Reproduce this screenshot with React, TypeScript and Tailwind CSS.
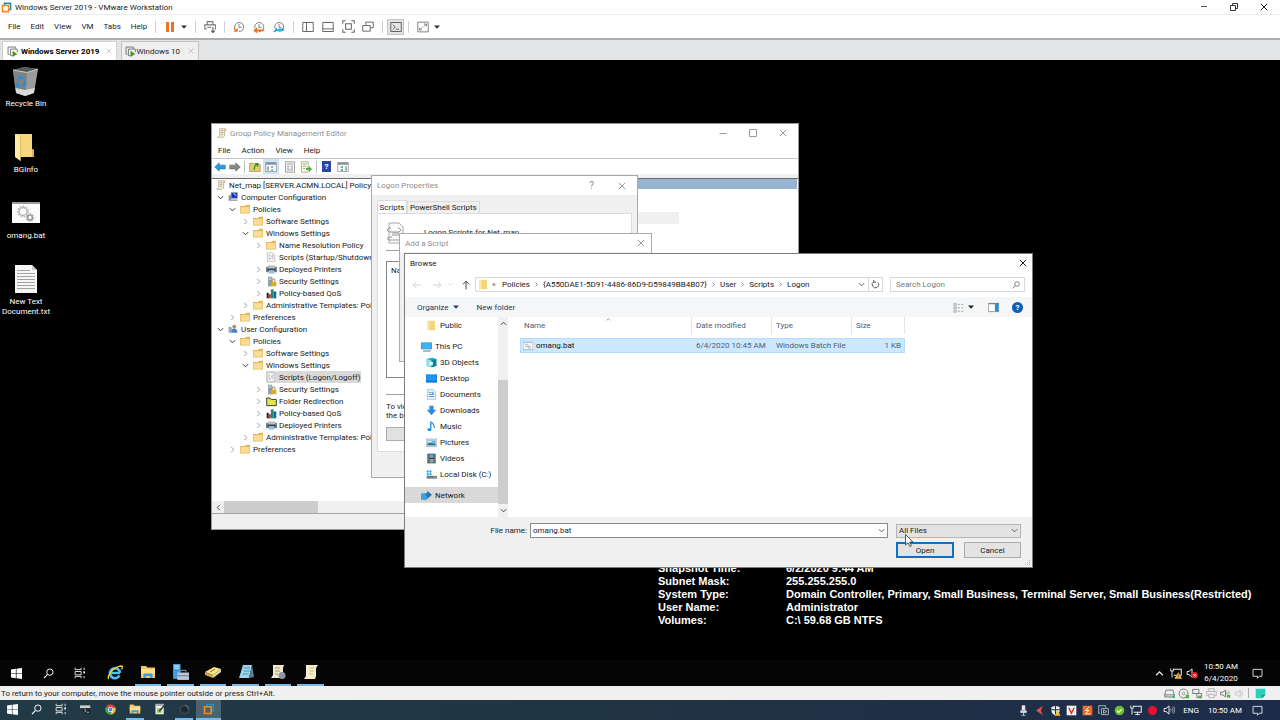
import { useState } from "react";
import type { ReactNode } from "react";
import clsx from "clsx";

type SvgProps = { size?: string; box?: string; children: ReactNode };

function Svg({ size = "size-3", box = "0 0 16 16", children }: SvgProps) {
  return (
    <svg className={clsx("shrink-0", size)} viewBox={box} fill="none" aria-hidden="true">
      {children}
    </svg>
  );
}

/* ---------- small shared glyphs ---------- */

function Chevron({ dir, size = "size-2", color = "#444" }: { dir: "down" | "right" | "up" | "left"; size?: string; color?: string }) {
  const paths = {
    down: "M2 5l6 6 6-6",
    right: "M5 2l6 6-6 6",
    up: "M2 11l6-6 6 6",
    left: "M11 2L5 8l6 6",
  };
  return (
    <Svg size={size}>
      <path d={paths[dir]} stroke={color} strokeWidth="2.2" />
    </Svg>
  );
}

function Triangle({ color = "#333" }: { color?: string }) {
  return (
    <Svg size="size-[6px]" box="0 0 6 6">
      <path d="M0 1.5h6L3 4.8z" fill={color} />
    </Svg>
  );
}

function CloseGlyph({ color = "#222", size = "size-[8px]" }: { color?: string; size?: string }) {
  return (
    <Svg size={size} box="0 0 8 8">
      <path d="M.8.8l6.4 6.4M7.2.8L.8 7.2" stroke={color} strokeWidth="1" />
    </Svg>
  );
}

function WindowsLogo({ size = "size-[11px]" }: { size?: string }) {
  return (
    <Svg size={size} box="0 0 12 12">
      <path d="M0 1.7l5.3-.8v4.8H0zM6 .8l6-.8v5.7H6zM0 6.3h5.3v4.8L0 10.3zM6 6.3h6V12l-6-.8z" fill="#fff" />
    </Svg>
  );
}

function SearchGlyph({ color = "#fff", size = "size-3" }: { color?: string; size?: string }) {
  return (
    <Svg size={size}>
      <circle cx="10" cy="6" r="4.6" stroke={color} strokeWidth="1.4" />
      <path d="M6.6 9.4L1.5 14.8" stroke={color} strokeWidth="1.6" />
    </Svg>
  );
}

function TaskView() {
  return (
    <Svg size="size-3">
      <path d="M1.5 1v2.5h8V1M1.5 15v-2.5h8V15M1.5 6h8v4.5h-8zM13.5 1v3M13.5 12v3" stroke="#ddd" strokeWidth="1.3" />
      <path d="M12.5 5.5h2v3h-2z" fill="#fff" />
    </Svg>
  );
}

function ExplorerIcon({ size = "size-4" }: { size?: string }) {
  return (
    <Svg size={size}>
      <path d="M1 2h5l1.5 1.5H15V14H1z" fill="#f2c75c" />
      <path d="M1 5h14v5H1z" fill="#ffe08a" />
      <path d="M3.5 14V9.5h9V14h-2.2v-2H5.7v2z" fill="#3f9ce0" />
    </Svg>
  );
}

function ActionCenter({ size = "size-3" }: { size?: string }) {
  return (
    <Svg size={size}>
      <path d="M1.5 2h13v10h-4L8 14.8V12H1.5z" stroke="#e8e8e8" strokeWidth="1.3" />
    </Svg>
  );
}

function VmwareLogo({ size = "size-[11px]" }: { size?: string }) {
  return (
    <Svg size={size}>
      <path d="M5 5V2h9v9h-3" stroke="#1b8fc6" strokeWidth="2.2" />
      <path d="M2 5h9v9H2z" stroke="#f38b1f" strokeWidth="2.2" />
    </Svg>
  );
}

function VmTabIcon({ color = "#777" }: { color?: string }) {
  return (
    <Svg size="size-[11px]">
      <path d="M3.5 12h-2V1.5h11V4M8 14H5V4.5h10V9" stroke={color} strokeWidth="1.4" />
      <path d="M8 7l7 4.5L8 16z" fill="#3f9c1d" />
    </Svg>
  );
}

function NetworkTray({ alert }: { alert?: boolean }) {
  return (
    <Svg size="size-3">
      <path d="M5 3h10v8H5M7 14h6M10 11v3" stroke="#eee" strokeWidth="1.4" />
      <path d="M1 2v3.5h3.5V2M2.7 5.5V14" stroke="#eee" strokeWidth="1.3" />
      {alert && <path d="M11 7l5 8.5H6z" fill="#fbc02d" />}
      {alert && <path d="M11 10v3M11 13.7v1" stroke="#222" strokeWidth="1" />}
    </Svg>
  );
}

function Speaker({ muted, color = "#eee" }: { muted?: boolean; color?: string }) {
  return (
    <Svg size="size-3">
      <path d="M1.5 6H4l4-3.5v11L4 10H1.5z" stroke={color} strokeWidth="1.3" />
      {muted ? (
        <>
          <circle cx="11.5" cy="11" r="4.3" fill="#e0232e" />
          <path d="M10 9.5l3 3M13 9.5l-3 3" stroke="#fff" strokeWidth="1.1" />
        </>
      ) : (
        <path d="M10 6c1 1.2 1 2.8 0 4M12 4.5c1.8 2 1.8 5 0 7M14 3c2 3 2 7 0 10" stroke={color} opacity=".7" />
      )}
    </Svg>
  );
}

/* ---------- VMware chrome ---------- */

function Divider() {
  return <span className="h-3 w-px bg-[#cfcfcf]" />;
}

function ToolButton({ label, active, children }: { label: string; active?: boolean; children: ReactNode }) {
  return (
    <button
      type="button"
      aria-label={label}
      className={clsx("flex h-4 items-center justify-center", active ? "w-[17px] border border-[#c4c4c4] bg-[#e4e4e4]" : "w-5")}
    >
      {children}
    </button>
  );
}

function Clock({ accent, kind }: { accent: string; kind: "take" | "revert" | "manage" }) {
  return (
    <Svg size="size-3">
      <path d="M2.5 9.5A6 6 0 1 1 8 14" stroke="#7a7a7a" strokeWidth="1.3" />
      <path d="M8 4v4.5h3.5" stroke="#7a7a7a" strokeWidth="1.2" />
      {kind === "take" && <path d="M1 9.5L5.5 14M1.5 13.5h4v-4" stroke={accent} strokeWidth="1.6" />}
      {kind === "revert" && <path d="M15 12.5H2M5.5 9.5L2 12.5l3.5 3" stroke={accent} strokeWidth="2.2" />}
      {kind === "manage" && <path d="M1 14.5l4.500-3M4.500 9.500a2 2 0 0 0 3.500 2h5M13 9.800v3.500" stroke={accent} strokeWidth="2.2" />}
    </Svg>
  );
}

const VM_MENU = ["File", "Edit", "View", "VM", "Tabs", "Help"];

function VmHeader() {
  return (
    <header className="bg-white text-[#222]">
      <div className="flex h-[15px] items-center border-b border-[#ececec]">
        <div className="flex items-center gap-[3px] pl-px">
          <VmwareLogo />
          <h1>Windows Server 2019 - VMware Workstation</h1>
        </div>
        <div className="ml-auto flex items-center gap-[22px] pr-3">
          <button type="button" aria-label="Minimize">
            <Svg size="size-[8px]" box="0 0 8 8"><path d="M1 3.5h6" stroke="#555" /></Svg>
          </button>
          <button type="button" aria-label="Restore">
            <Svg size="size-[8px]" box="0 0 8 8"><path d="M.5 2.5h5v5h-5zM2.5 2.5v-2h5v5h-2" stroke="#333" /></Svg>
          </button>
          <button type="button" aria-label="Close"><CloseGlyph /></button>
        </div>
      </div>

      <div className="flex h-[23px] items-center">
        <nav className="flex items-center gap-[10px] pr-2 pl-2" aria-label="Main menu">
          {VM_MENU.map((item) => (
            <button key={item} type="button">{item}</button>
          ))}
        </nav>
        <Divider />
        <div className="flex items-center gap-px pl-1">
          <ToolButton label="Suspend">
            <Svg size="size-[10px]" box="0 0 10 10"><path d="M1 0h3v10H1zM6 0h3v10H6z" fill="#f37021" /></Svg>
          </ToolButton>
          <button type="button" aria-label="Power options"><Triangle /></button>
        </div>
        <span className="ml-2 flex items-center gap-1">
          <Divider />
          <ToolButton label="Send Ctrl+Alt+Del">
            <Svg size="size-[13px]">
              <path d="M4 6V2h7v4M3.5 11H1V6h13v5h-1" stroke="#777" strokeWidth="1.3" />
              <path d="M4 9h5" stroke="#777" strokeWidth="1.3" />
              <path d="M11 9v6M9 13l2 2.5 2-2.5" stroke="#555" strokeWidth="1.3" />
            </Svg>
          </ToolButton>
          <Divider />
        </span>
        <div className="flex items-center px-1">
          <ToolButton label="Take snapshot"><Clock kind="take" accent="#f37021" /></ToolButton>
          <ToolButton label="Revert snapshot"><Clock kind="revert" accent="#f37021" /></ToolButton>
          <ToolButton label="Manage snapshots"><Clock kind="manage" accent="#159fd0" /></ToolButton>
        </div>
        <Divider />
        <div className="flex items-center px-1">
          <ToolButton label="Library">
            <Svg size="size-3"><path d="M1 2h14v12H1zM6 2v12" stroke="#666" strokeWidth="1.3" /></Svg>
          </ToolButton>
          <ToolButton label="Thumbnail bar">
            <Svg size="size-3"><path d="M1 2h14v12H1zM1 10.5h14" stroke="#666" strokeWidth="1.3" /></Svg>
          </ToolButton>
          <ToolButton label="Full screen">
            <Svg size="size-[13px]"><path d="M1 4.5V1h3.5M11.5 1H15v3.5M15 11.5V15h-3.5M4.5 15H1v-3.5M4.5 4.5h7v7h-7z" stroke="#666" strokeWidth="1.3" /></Svg>
          </ToolButton>
          <ToolButton label="Unity">
            <Svg size="size-3"><path d="M5 5V1.5h10V9h-4M1 6h10v7.5H1z" stroke="#666" strokeWidth="1.3" /></Svg>
          </ToolButton>
        </div>
        <Divider />
        <div className="px-1">
          <ToolButton label="Console view" active>
            <Svg size="size-3"><path d="M1 2h14v12H1zM4 5l3 3-3 3M8 11h4" stroke="#555" strokeWidth="1.2" /></Svg>
          </ToolButton>
        </div>
        <Divider />
        <div className="flex items-center gap-px pl-1">
          <ToolButton label="Stretch guest">
            <Svg size="size-3"><path d="M1 1.5h14v13H1zM9.5 4h3v3M12.5 4L9 7.5M6.5 12h-3V9M3.5 12L7 8.5" stroke="#777" strokeWidth="1.2" /></Svg>
          </ToolButton>
          <button type="button" aria-label="Stretch options"><Triangle /></button>
        </div>
      </div>

      <div className="flex h-[22px] items-end gap-1 border-t-2 border-[#adadad] bg-[#e3e4e5] pl-[2px]" role="tablist">
        <div className="flex h-[19px] items-center gap-[3px] border border-b-0 border-[#cfcfcf] bg-white pr-1 pl-1">
          <VmTabIcon />
          <button type="button" role="tab" aria-selected="true" className="font-bold text-black">Windows Server 2019</button>
          <button type="button" aria-label="Close tab" className="ml-1"><CloseGlyph color="#bbb" size="size-[6px]" /></button>
        </div>
        <div className="flex h-[19px] items-center border border-b-0 border-[#c4c4c4] bg-[#efefef] pr-1 pl-[3px]">
          <VmTabIcon />
          <button type="button" role="tab" aria-selected="false">Windows 10</button>
          <button type="button" aria-label="Close tab" className="ml-2"><CloseGlyph color="#bbb" size="size-[6px]" /></button>
        </div>
      </div>
    </header>
  );
}

/* ---------- guest desktop shortcuts ---------- */

function RecycleBin() {
  return (
    <Svg size="h-8 w-7" box="0 0 28 32">
      <path d="M1 5l11-3 14 2-4 24-9 3-9-3z" fill="#9a9c9c" />
      <path d="M1 5l11-3 14 2-11 3.5z" fill="#54585a" />
      <path d="M1 5l14 2.5L13.5 31 4 28z" fill="#7f8383" />
      <path d="M3.5 23l9.5 2 9.8-2-1 5-8.5 3-9-3z" fill="#d9dada" />
      <path d="M1 5l14 2.5L26 4" stroke="#c9caca" />
      <path d="M6 15l2-3 3 1.5M5 17.500l1 3.500 2.500.5M12.500 16l.5 3-2 2.500" stroke="#2b8ed8" strokeWidth="2.6" />
    </Svg>
  );
}

function BgFolder() {
  return (
    <Svg size="h-8 w-7" box="0 0 28 32">
      <path d="M3 3h17v15l2 1v7H8z" fill="#f5d87c" />
      <path d="M3 3l5.5 3v24L3 26z" fill="#ffecab" />
      <path d="M8.500 6v24" stroke="#d5ac48" strokeWidth=".7" />
      <path d="M20 18l2 1v7h-2z" fill="#dfb650" />
    </Svg>
  );
}

function BatDesktopIcon() {
  return (
    <Svg size="h-8 w-7" box="0 0 28 32">
      <path d="M0 5h28v21H0z" fill="#fbfbfb" />
      <path d="M0 5h28v2H0z" fill="#9b9b9b" />
      <circle cx="11" cy="14.5" r="4" stroke="#b5b5b5" strokeWidth="1.5" />
      <circle cx="11" cy="14.5" r="5.3" stroke="#bbb" strokeWidth="1.5" strokeDasharray="1.5 1.5" />
      <circle cx="18" cy="20.5" r="2.5" stroke="#999" strokeWidth="1.7" />
      <circle cx="18" cy="20.5" r="4" stroke="#aaa" strokeDasharray="1.5 1.5" />
    </Svg>
  );
}

function TextDesktopIcon() {
  return (
    <Svg size="h-8 w-7" box="0 0 28 32">
      <path d="M3 2h17l5 5v23H3z" fill="#f6f6f6" />
      <path d="M20 2v5h5z" fill="#c8c8c8" />
      <path d="M5 7.5h13M5 10.5h18M5 13.5h18M5 16.5h18M5 19.5h18M5 22.5h18M5 25.5h18" stroke="#a2a2a2" />
    </Svg>
  );
}

const SHORTCUTS = [
  { label: "Recycle Bin", icon: <RecycleBin /> },
  { label: "BGInfo", icon: <BgFolder /> },
  { label: "omang.bat", icon: <BatDesktopIcon /> },
  { label: "New Text Document.txt", icon: <TextDesktopIcon /> },
];

const BG_INFO = [
  ["Snapshot Time:", "6/2/2020 9:44 AM"],
  ["Subnet Mask:", "255.255.255.0"],
  ["System Type:", "Domain Controller, Primary, Small Business, Terminal Server, Small Business(Restricted)"],
  ["User Name:", "Administrator"],
  ["Volumes:", "C:\\ 59.68 GB NTFS"],
];

/* ---------- Group Policy Management Editor ---------- */

type TreeKind = "scroll" | "computer" | "user" | "folder" | "script" | "printer" | "security" | "qos" | "redirect";

function TreeIcon({ kind }: { kind: TreeKind }) {
  switch (kind) {
    case "scroll":
      return (
        <Svg size="size-[10px]">
          <path d="M4 1h10l-2 3v9l-3 2H1l3-3z" fill="#f1ead2" stroke="#aaa081" />
          <path d="M6 4h4M6 7h4M6 10h3" stroke="#988c68" />
          <path d="M12 2h3v3h-3z" fill="#d6bf7a" />
        </Svg>
      );
    case "computer":
      return (
        <Svg size="size-[10px]">
          <path d="M5 1h10v9H5z" fill="#1832b8" stroke="#8794a8" />
          <path d="M9 2l4 4" stroke="#89a6ff" strokeWidth="2" />
          <path d="M1 5h4v9H1zM5 12h10v2H5z" fill="#8695a6" />
        </Svg>
      );
    case "user":
      return (
        <Svg size="size-[10px]">
          <circle cx="10" cy="4" r="3" fill="#b8875a" />
          <path d="M4 14c0-5 3-7 6-7s5 2 5 7z" fill="#4b7ed0" />
          <path d="M1 4l5 1v8l-5 1z" fill="#93a9bf" />
        </Svg>
      );
    case "script":
      return (
        <Svg size="size-[10px]">
          <path d="M2 1h9l3 3v11H2z" fill="#fff" stroke="#aaa" />
          <path d="M4 5h3M9 5h3M4 8h2M8 8h4M4 11h4M10 11h2" stroke="#888" strokeWidth="1.3" />
        </Svg>
      );
    case "printer":
      return (
        <Svg size="size-[11px]">
          <path d="M0 4h16v8H0z" fill="#7c858b" />
          <path d="M3 2h10v4H3z" fill="#b9c0c4" />
          <path d="M2 7h12v3H2z" fill="#3e464c" />
          <path d="M4 9h8v5H4z" fill="#8fc3ea" />
        </Svg>
      );
    case "security":
      return (
        <Svg size="size-[11px]">
          <path d="M3 1h6v14H3z" fill="#8c9daa" />
          <path d="M4 3h4M4 5h4" stroke="#dfe8ee" />
          <path d="M9 8.5V6a2 2 0 0 1 4 0v2.5" stroke="#8f7a2a" strokeWidth="1.3" />
          <path d="M7 8.5h8V15H7z" fill="#dba928" />
        </Svg>
      );
    case "qos":
      return (
        <Svg size="size-[11px]">
          <path d="M1 7h3v8H1z" fill="#222" />
          <path d="M4 9h3v6H4z" fill="#c33" />
          <path d="M7 2h4v13H7z" fill="#1b8f5a" />
          <path d="M11 5h4v10h-4z" fill="#1766b5" />
        </Svg>
      );
    case "redirect":
      return (
        <Svg size="size-[11px]">
          <path d="M1 3h5l1.5 2H15v9H1z" fill="#dfe64e" stroke="#23302a" strokeWidth="1.3" />
        </Svg>
      );
    default:
      return (
        <Svg size="size-[10px]">
          <path d="M0 3h8l1.5-2H16v14H0z" fill="#e3b95c" />
          <path d="M1 5h14v9H1z" fill="#fadd93" />
        </Svg>
      );
  }
}

type TreeNode = { label: string; level: 0 | 1 | 2 | 3 | 4; kind: TreeKind; open?: boolean; leaf?: boolean; selected?: boolean };

const TREE: TreeNode[] = [
  { label: "Net_map [SERVER.ACMN.LOCAL] Policy", level: 0, kind: "scroll", leaf: true },
  { label: "Computer Configuration", level: 1, kind: "computer", open: true },
  { label: "Policies", level: 2, kind: "folder", open: true },
  { label: "Software Settings", level: 3, kind: "folder" },
  { label: "Windows Settings", level: 3, kind: "folder", open: true },
  { label: "Name Resolution Policy", level: 4, kind: "folder" },
  { label: "Scripts (Startup/Shutdown)", level: 4, kind: "script", leaf: true },
  { label: "Deployed Printers", level: 4, kind: "printer" },
  { label: "Security Settings", level: 4, kind: "security" },
  { label: "Policy-based QoS", level: 4, kind: "qos" },
  { label: "Administrative Templates: Policy", level: 3, kind: "folder" },
  { label: "Preferences", level: 2, kind: "folder" },
  { label: "User Configuration", level: 1, kind: "user", open: true },
  { label: "Policies", level: 2, kind: "folder", open: true },
  { label: "Software Settings", level: 3, kind: "folder" },
  { label: "Windows Settings", level: 3, kind: "folder", open: true },
  { label: "Scripts (Logon/Logoff)", level: 4, kind: "script", leaf: true, selected: true },
  { label: "Security Settings", level: 4, kind: "security" },
  { label: "Folder Redirection", level: 4, kind: "redirect" },
  { label: "Policy-based QoS", level: 4, kind: "qos" },
  { label: "Deployed Printers", level: 4, kind: "printer" },
  { label: "Administrative Templates: Policy", level: 3, kind: "folder" },
  { label: "Preferences", level: 2, kind: "folder" },
];

const TREE_INDENT = ["pl-[4px]", "pl-[5px]", "pl-[17px]", "pl-[30px]", "pl-[43px]"];

function PolicyTree() {
  return (
    <ul>
      {TREE.map((node, i) => (
        <li key={i} className={clsx("flex h-3 items-center whitespace-nowrap", TREE_INDENT[node.level])}>
          {node.level > 0 && (
            <span className="flex w-[11px] shrink-0 items-center">
              {!node.leaf && <Chevron dir={node.open ? "down" : "right"} size="size-[7px]" color={node.open ? "#333" : "#999"} />}
            </span>
          )}
          <button type="button" className={clsx("flex h-3 items-center", node.selected && "bg-[#d9d9d9]")}>
            <span className="flex w-[13px] shrink-0"><TreeIcon kind={node.kind} /></span>
            {node.label}
          </button>
        </li>
      ))}
    </ul>
  );
}

function PolicyEditor() {
  return (
    <section className="absolute top-[62px] left-[211px] flex h-[407px] w-[588px] flex-col border border-[#999] bg-white text-[#1a1a1a]">
      <div className="flex h-[18px] items-center gap-[3px] pl-[5px] text-[#8f8f8f]">
        <TreeIcon kind="scroll" />
        <h2>Group Policy Management Editor</h2>
        <div className="ml-auto flex items-center gap-[22px] pr-[11px]">
          <button type="button" aria-label="Minimize editor">
            <Svg size="size-[8px]" box="0 0 8 8"><path d="M.5 4.5h7" stroke="#999" /></Svg>
          </button>
          <button type="button" aria-label="Maximize editor">
            <Svg size="size-[8px]" box="0 0 8 8"><path d="M.5.5h7v7h-7z" stroke="#999" /></Svg>
          </button>
          <button type="button" aria-label="Close editor"><CloseGlyph color="#999" /></button>
        </div>
      </div>
      <nav className="flex h-[17px] items-center gap-[11px] border-b border-[#c4c4c4] pl-[6px]" aria-label="Editor menu">
        {["File", "Action", "View", "Help"].map((item) => (
          <button key={item} type="button">{item}</button>
        ))}
      </nav>
      <div className="flex h-[15px] items-center pl-[2px]">
        <button type="button" aria-label="Back">
          <Svg size="size-3"><path d="M1 8l6-5.5v3h8v5H7v3z" fill="#2d9be0" stroke="#1a6aa8" strokeWidth=".8" /></Svg>
        </button>
        <button type="button" aria-label="Forward" className="ml-[3px]">
          <Svg size="size-3"><path d="M15 8L9 2.5v3H1v5h8v3z" fill="#888" stroke="#5c5c5c" strokeWidth=".8" /></Svg>
        </button>
        <span className="mr-1 ml-[3px] h-3 w-px bg-[#bdbdbd]" />
        <button type="button" aria-label="Up one level">
          <Svg size="size-3"><path d="M1 3h5l1.5 2H15v9H1z" fill="#e9cb73" stroke="#b29034" /><path d="M7 12c0-5 1-6 4-8M8 3.5h4l-1 4" stroke="#2c9a33" strokeWidth="1.8" /></Svg>
        </button>
        <button type="button" aria-label="Show console tree" className="ml-[2px] flex h-[15px] w-4 items-center justify-center bg-[#cce4f7]">
          <Svg size="size-3"><path d="M1 2h14v12H1z" fill="#fff" stroke="#8a9097" /><path d="M1 2h14v3H1z" fill="#8a9097" /><path d="M2.5 7h3v6h-3z" fill="#aab6c0" /><path d="M8 7h3v2H8zM8 11h3v2H8z" fill="#55a6d8" /></Svg>
        </button>
        <button type="button" aria-label="Properties" className="ml-[5px]">
          <Svg size="size-3"><path d="M2 1h12v14H2z" fill="#f5f5f5" stroke="#888" /><path d="M4 4h8M4 7h3M9 7h3M4 9.5h3M9 9.5h3M4 12h8" stroke="#888" /></Svg>
        </button>
        <button type="button" aria-label="Export list" className="ml-[4px]">
          <Svg size="size-3"><path d="M2 1h9v14H2z" fill="#fff9dd" stroke="#999" /><path d="M4 4h5M4 7h4M4 10h3" stroke="#888" /><path d="M8 9h4V6.5l4 4-4 4V12H8z" fill="#45b03c" /></Svg>
        </button>
        <span className="mx-1 h-3 w-px bg-[#bdbdbd]" />
        <button type="button" aria-label="Help topics" className="ml-px flex h-[11px] w-[9px] items-center justify-center bg-[#2847a8] font-bold text-white">?</button>
        <button type="button" aria-label="Action pane" className="ml-[6px]">
          <Svg size="size-3"><path d="M1 2h14v12H1z" fill="#fff" stroke="#8a9097" /><path d="M1 2h14v3H1z" fill="#8a9097" /><path d="M10.5 7h3v6h-3z" fill="#aab6c0" /><path d="M5 7h3v2H5zM5 11h3v2H5z" fill="#4c9a5b" /></Svg>
        </button>
      </div>
      <div className="h-1 bg-[#f0f0f0]" />
      <div className="flex min-h-0 flex-1 border-t border-[#6d6d6d]">
        <div className="flex w-[360px] flex-col">
          <div className="min-h-0 flex-1 overflow-hidden"><PolicyTree /></div>
          <div className="flex h-3 items-center bg-[#f0f0f0] pl-[3px]">
            <Chevron dir="left" size="size-[7px]" />
            <span className="ml-[2px] h-full w-[94px] bg-[#cdcdcd]" />
          </div>
        </div>
        <div className="flex-1 pr-px">
          <div className="h-[10px] bg-[#99b4d1]" />
          <div className="mt-[23px] h-3 w-[107px] bg-[#f0f0f0]" />
        </div>
      </div>
      <div className="h-4 border-t border-[#a5a5a5] bg-[#f0f0f0]" />
    </section>
  );
}

/* ---------- stacked dialogs ---------- */

function LogonProperties() {
  return (
    <section className="absolute top-[114px] left-[371px] flex h-[303px] w-[267px] flex-col border border-[#aaa] bg-[#f0f0f0] text-[#1a1a1a]">
      <div className="flex h-[19px] items-center bg-white pl-[5px] text-[#8f8f8f]">
        <h2>Logon Properties</h2>
        <div className="ml-auto flex items-center gap-6 pr-[11px]">
          <button type="button" aria-label="Dialog help" className="text-[10px]">?</button>
          <button type="button" aria-label="Close properties"><CloseGlyph color="#999" /></button>
        </div>
      </div>
      <div className="flex items-end px-[5px] pt-[5px]" role="tablist">
        <button type="button" role="tab" aria-selected="true" className="h-[13px] w-[30px] border border-b-0 border-[#dcdcdc] bg-white">Scripts</button>
        <button type="button" role="tab" aria-selected="false" className="h-3 border border-b-0 border-[#dcdcdc] px-[2px]">PowerShell Scripts</button>
      </div>
      <div className="mx-[5px] h-[239px] border border-[#dcdcdc] bg-white px-[8px] pt-2">
        <div className="flex h-[29px] gap-5 border-b border-[#a0a0a0]">
          <Svg size="h-[22px] w-[18px]" box="0 0 18 22">
            <path d="M3 1h10l4 4v16H3z" fill="#fafafa" stroke="#aaa" />
            <path d="M5 6H3L1 8l2 2h10l2-2-2-2h-1M6 11h7M6 13h7M6 15H3l-2 1.5L3 18h10l2-1.5" stroke="#999" />
          </Svg>
          <h3 className="mt-[5px]">Logon Scripts for Net_map</h3>
        </div>
        <div className="mt-[10px] h-[117px] border border-[#828790] px-1 pt-[3px]">Name</div>
        <div className="mt-4 border-t border-[#a0a0a0] pt-[7px] leading-[9px]">
          <p>To view</p>
          <p>the button</p>
        </div>
        <button type="button" aria-label="Show Files" className="mt-[7px] h-[14px] w-[80px] border border-[#adadad] bg-[#e1e1e1]" />
      </div>
    </section>
  );
}

function AddScript() {
  return (
    <section className="absolute top-[172px] left-[399px] h-[129px] w-[253px] border border-[#aaa] bg-[#f0f0f0]">
      <div className="flex h-[18px] items-center justify-between bg-white pr-[6px] pl-[5px] text-[#8f8f8f]">
        <h2>Add a Script</h2>
        <button type="button" aria-label="Close script dialog"><CloseGlyph color="#999" /></button>
      </div>
    </section>
  );
}

/* ---------- Browse dialog ---------- */

type NavKind = "folder" | "pc" | "objects" | "desktop" | "docs" | "down" | "music" | "pics" | "video" | "disk" | "network";

function NavIcon({ kind }: { kind: NavKind }) {
  const art: Record<NavKind, ReactNode> = {
    folder: (
      <>
        <path d="M2 1h11v12l1 2H2z" fill="#f5d676" />
        <path d="M2 1l3 2v12l-3-1z" fill="#ffe9a6" />
      </>
    ),
    pc: (
      <>
        <path d="M0 2h16v10H0z" fill="#3e8fc9" />
        <path d="M1 3h14v8H1z" fill="#3fb4f4" />
        <path d="M3 14.5h11" stroke="#5f7483" strokeWidth="1.5" />
      </>
    ),
    objects: (
      <>
        <path d="M1 3l8-2 6 2v10l-6 2-8-2z" fill="#17aebf" />
        <path d="M1 3l7 2v10l-7-2z" fill="#8ce3ea" />
        <path d="M8 5l7-2v10l-7 2z" fill="#0d7fa0" />
        <path d="M5 7h5v5H5z" fill="#e6fbfd" />
      </>
    ),
    desktop: (
      <>
        <path d="M0 2h16v12H0z" fill="#1279d1" />
        <path d="M1 3h14v8H1z" fill="#1d97f2" />
      </>
    ),
    docs: (
      <>
        <path d="M2 1h9l3 3v11H2z" fill="#eef6fc" stroke="#8fb0c8" />
        <path d="M4 5h4M4 8h8M4 11h8" stroke="#3e92cc" strokeWidth="1.3" />
        <path d="M9 4h2v3H9z" fill="#3e92cc" />
      </>
    ),
    down: <path d="M5 1h6v6h4l-7 8-7-8h4z" fill="#2f8be0" />,
    music: (
      <>
        <path d="M7 1v10" stroke="#1f93e8" strokeWidth="2" />
        <path d="M8 1c1 4 5 4 4 9" stroke="#1f93e8" strokeWidth="1.8" />
        <ellipse cx="5" cy="12.5" rx="3" ry="2.5" fill="#1f93e8" />
      </>
    ),
    pics: (
      <>
        <path d="M0 3h16v11H0z" fill="#dfe7ec" stroke="#93a5b1" />
        <path d="M2 5h12v7H2z" fill="#6cb6e6" />
        <path d="M2 10l5-1 7 1v2H2z" fill="#2b6a6f" />
        <path d="M3 6h5v1.5H3z" fill="#fff" />
      </>
    ),
    video: (
      <>
        <path d="M2 1h12v14H2z" fill="#3d4650" />
        <path d="M5 2h6v5H5zM5 9h6v5H5z" fill="#6ea6d6" />
        <path d="M5 9h6v2H5z" fill="#c4a35a" />
        <path d="M3.5 2v12M12.5 2v12" stroke="#c9ced3" strokeDasharray="1.5 1.5" />
      </>
    ),
    disk: (
      <>
        <path d="M1 2h3v3H1zM5 2h3v3H5zM1 6h3v3H1zM5 6h3v3H5z" fill="#19a7dc" />
        <path d="M1 10h15v4H1z" fill="#6e777d" />
        <path d="M12 12h3" stroke="#7df07f" strokeWidth="1.3" />
      </>
    ),
    network: (
      <>
        <path d="M0 5l9-1v9l-9 1z" fill="#3aa3e6" />
        <path d="M9 1l7 6-7 6V9H7V5h2z" fill="#2476ae" />
        <path d="M3 14h6" stroke="#5b7a90" />
      </>
    ),
  };
  return <Svg size="size-[11px]">{art[kind]}</Svg>;
}

const NAV_GROUPS: { label: string; kind: NavKind; root?: boolean }[][] = [
  [{ label: "Public", kind: "folder" }],
  [
    { label: "This PC", kind: "pc", root: true },
    { label: "3D Objects", kind: "objects" },
    { label: "Desktop", kind: "desktop" },
    { label: "Documents", kind: "docs" },
    { label: "Downloads", kind: "down" },
    { label: "Music", kind: "music" },
    { label: "Pictures", kind: "pics" },
    { label: "Videos", kind: "video" },
    { label: "Local Disk (C:)", kind: "disk" },
  ],
  [{ label: "Network", kind: "network", root: true }],
];

const CRUMBS = ["Policies", "{A550DAE1-5D91-4486-86D9-D59849BB4B07}", "User", "Scripts", "Logon"];

const COLUMNS = [
  { label: "Name", width: "w-[172px]" },
  { label: "Date modified", width: "w-[80px]" },
  { label: "Type", width: "w-[80px]" },
  { label: "Size", width: "w-[53px]" },
];

function BrowseDialog() {
  const [fileName, setFileName] = useState("omang.bat");
  const [query, setQuery] = useState("");

  return (
    <section className="absolute top-[192px] left-[404px] flex h-[315px] w-[629px] flex-col border border-[#7d7d7d] bg-white text-[#1a1a1a]">
      <div className="flex h-[18px] items-center justify-between pr-[5px] pl-[5px]">
        <h2>Browse</h2>
        <button type="button" aria-label="Close browse dialog"><CloseGlyph /></button>
      </div>

      <div className="flex h-[25px] items-center pr-[7px] pl-[7px]">
        <button type="button" aria-label="Back" className="w-5">
          <Svg size="size-[10px]"><path d="M15 8H2M7 3L2 8l5 5" stroke="#d0d0d0" strokeWidth="1.5" /></Svg>
        </button>
        <button type="button" aria-label="Forward" className="w-4">
          <Svg size="size-[10px]"><path d="M1 8h13M9 3l5 5-5 5" stroke="#d0d0d0" strokeWidth="1.5" /></Svg>
        </button>
        <Chevron dir="down" size="size-[5px]" color="#ccc" />
        <button type="button" aria-label="Up" className="ml-2">
          <Svg size="size-[10px]"><path d="M8 15V2M3 7l5-5 5 5" stroke="#444" strokeWidth="1.6" /></Svg>
        </button>
        <div className="ml-1 flex h-[15px] flex-1 items-center border border-[#d9d9d9] pl-[2px]">
          <NavIcon kind="folder" />
          <span className="ml-[3px] w-[10px] text-[#555]">«</span>
          {CRUMBS.map((crumb, i) => (
            <span key={crumb} className="flex items-center">
              {i > 0 && <span className="mx-1 flex"><Chevron dir="right" size="size-[5px]" color="#555" /></span>}
              <button type="button">{crumb}</button>
            </span>
          ))}
          <button type="button" aria-label="Previous locations" className="mr-[3px] ml-auto"><Chevron dir="down" size="size-[7px]" color="#555" /></button>
          <button type="button" aria-label="Refresh" className="flex h-full w-[14px] items-center justify-center border-l border-[#d9d9d9]">
            <Svg size="size-[9px]"><path d="M12.5 4.5A5.8 5.8 0 1 1 5 3M5 0v4h4" stroke="#555" strokeWidth="1.7" /></Svg>
          </button>
        </div>
        <label className="ml-[7px] flex h-[15px] w-[135px] items-center border border-[#d9d9d9] pr-1 pl-[5px]">
          <input
            className="min-w-0 flex-1 outline-none placeholder:text-[#767676]"
            placeholder="Search Logon"
            aria-label="Search Logon"
            value={query}
            onChange={(e) => setQuery(e.target.value)}
          />
          <SearchGlyph color="#555" size="size-2" />
        </label>
      </div>

      <div className="flex h-5 items-center bg-[#f5f6f7] pr-[9px] pl-3 text-[#243c63]">
        <button type="button" className="flex items-center gap-1">Organize <Triangle color="#243c63" /></button>
        <button type="button" className="ml-[18px]">New folder</button>
        <button type="button" aria-label="Change view" className="ml-auto flex items-center gap-1">
          <Svg size="size-[11px]">
            <path d="M1 2h4v3H1zM1 7h4v3H1zM1 12h4v3H1z" fill="#ccd2d8" stroke="#999" strokeWidth=".7" />
            <path d="M7 3.5h3M7 8.5h3M7 13.5h3M12 3.5h3M12 8.5h3M12 13.5h3" stroke="#888" />
          </Svg>
          <Triangle color="#222" />
        </button>
        <button type="button" aria-label="Preview pane" className="ml-[14px]">
          <Svg size="size-[11px]"><path d="M.5 2h15v12H.5z" fill="#fff" stroke="#777" /><path d="M10 2h5.5v12H10z" fill="#2b8fd6" /><path d="M1 2.5h15" stroke="#777" strokeWidth="1.5" /></Svg>
        </button>
        <button type="button" aria-label="Get help" className="ml-[13px] flex size-[11px] items-center justify-center rounded-full bg-[#0a5fb4] font-bold text-white">?</button>
      </div>

      <div className="flex min-h-0 flex-1">
        <nav className="flex w-[93px] flex-col gap-[5px]" aria-label="Locations">
          {NAV_GROUPS.map((group, g) => (
            <div key={g}>
              {group.map((item) => (
                <button
                  key={item.label}
                  type="button"
                  className={clsx(
                    "flex h-4 w-full items-center gap-[3px] whitespace-nowrap",
                    item.root ? "pl-4" : "pl-[21px]",
                    item.kind === "network" && "bg-[#d9d9d9]",
                  )}
                >
                  <NavIcon kind={item.kind} />
                  {item.label}
                </button>
              ))}
            </div>
          ))}
        </nav>
        <div className="flex w-[10px] flex-col items-center bg-[#f0f0f0] py-[3px]">
          <Chevron dir="up" size="size-[7px]" />
          <span className="mt-auto mb-[3px] h-[124px] w-full bg-[#cdcdcd]" />
          <Chevron dir="down" size="size-[7px]" />
        </div>
        <div className="min-w-0 flex-1 pl-3">
          <table className="w-[385px] table-fixed text-left">
            <thead>
              <tr>
                {COLUMNS.map((col) => (
                  <th key={col.label} scope="col" className={clsx("relative h-[21px] p-0 align-top font-normal text-[#4c607a]", col.width)}>
                    <div className="flex h-[17px] items-center border-r border-[#e5e5e5] pl-1">{col.label}</div>
                    {col.label === "Name" && (
                      <span className="absolute top-0 left-1/2"><Chevron dir="up" size="size-[5px]" color="#777" /></span>
                    )}
                  </th>
                ))}
              </tr>
            </thead>
            <tbody>
              <tr className="h-[15px] bg-[#cce8ff] text-[#4f6173] outline outline-[#b5dcfb] -outline-offset-1">
                <td className="p-0 text-[#111]">
                  <div className="flex items-center gap-[3px] pl-[3px]">
                    <Svg size="size-[10px]">
                      <path d="M0 2h16v12H0z" fill="#f5f8fa" stroke="#8495a3" />
                      <circle cx="6" cy="7" r="2" stroke="#8495a3" />
                      <circle cx="10" cy="10" r="1.7" stroke="#8495a3" />
                    </Svg>
                    omang.bat
                  </div>
                </td>
                <td className="py-0 pr-0 pl-1 whitespace-nowrap">6/4/2020 10:45 AM</td>
                <td className="py-0 pr-0 pl-1 whitespace-nowrap">Windows Batch File</td>
                <td className="py-0 pr-1 pl-0 text-right">1 KB</td>
              </tr>
            </tbody>
          </table>
        </div>
      </div>

      <form className="relative flex h-[50px] flex-col gap-[4px] bg-[#f0f0f0] pt-[6px] pr-[11px]" onSubmit={(e) => e.preventDefault()}>
        <div className="flex items-center">
          <label htmlFor="file-name" className="w-[125px] pr-[3px] text-right">File name:</label>
          <div className="flex h-[15px] flex-1 items-center border border-[#8a8a8a] bg-white pr-[2px] pl-[2px]">
            <input id="file-name" className="min-w-0 flex-1 outline-none" value={fileName} onChange={(e) => setFileName(e.target.value)} />
            <Chevron dir="down" size="size-[7px]" color="#555" />
          </div>
          <div className="ml-2 grid h-[14px] w-[125px] items-center border border-[#b5b5b5] bg-[#e3e3e3]">
            <select aria-label="File type" className="col-start-1 row-start-1 w-full appearance-none pl-[2px] outline-none">
              <option>All Files</option>
            </select>
            <span className="pointer-events-none col-start-1 row-start-1 mr-[2px] justify-self-end"><Chevron dir="down" size="size-[7px]" color="#555" /></span>
          </div>
        </div>
        <div className="flex justify-end gap-[10px]">
          <button type="submit" className="flex h-4 w-[58px] items-center justify-center border-2 border-[#0a72c9] bg-[#e3e3e3]">Open</button>
          <button type="button" className="flex h-4 w-[57px] items-center justify-center border border-[#adadad] bg-[#e3e3e3]">Cancel</button>
        </div>
        <span className="absolute right-px bottom-px">
          <Svg size="size-[6px]" box="0 0 6 6"><path d="M4 0h1v1H4zM4 2h1v1H4zM4 4h1v1H4zM2 2h1v1H2zM2 4h1v1H2zM0 4h1v1H0z" fill="#aaa" /></Svg>
        </span>
      </form>
    </section>
  );
}

/* ---------- taskbars ---------- */

const GUEST_APPS = [
  {
    name: "Internet Explorer",
    running: false,
    icon: (
      <Svg size="size-4">
        <path d="M13 9H4.5M12.5 11.5A5 5 0 1 1 13 8.8" stroke="#4cc3f1" strokeWidth="2.6" />
        <path d="M2 15c-3-2 4-12 12-13 2 0 1.5 2 .5 3.5" stroke="#f3cf3e" strokeWidth="1.3" />
      </Svg>
    ),
  },
  { name: "File Explorer", running: true, icon: <ExplorerIcon /> },
  {
    name: "Server Manager",
    running: true,
    icon: (
      <Svg size="size-[17px]">
        <path d="M1 0h7v14H1z" fill="#3aa0e8" />
        <path d="M2 2h5M2 4h5" stroke="#d9efff" />
        <path d="M5 8h11v7H5z" fill="#b9c8d4" />
        <path d="M8 8V6h5v2M5 11h11" stroke="#6c8190" />
      </Svg>
    ),
  },
  {
    name: "Active Directory",
    running: true,
    icon: (
      <Svg size="size-4">
        <path d="M0 8l9-5 7 2-8 6z" fill="#f7e78a" />
        <path d="M0 8l8 3v3l-8-3z" fill="#c9a94a" />
        <path d="M8 11l8-6v3l-8 6z" fill="#e8d9a4" />
        <path d="M5 8l5-3" stroke="#8d6f24" />
      </Svg>
    ),
  },
  {
    name: "Notepad",
    running: true,
    icon: (
      <Svg size="size-4">
        <path d="M5 1h9l-3 13H1z" fill="#9ed4ea" />
        <path d="M14 1l2 12-5 1z" fill="#5a7f93" />
        <path d="M6 4h6M5.5 7h6M4.5 10h6" stroke="#4c94b4" />
      </Svg>
    ),
  },
  {
    name: "Group Policy Management",
    running: true,
    icon: (
      <Svg size="size-4">
        <path d="M3 1h11l-1 3v10H1l2-3z" fill="#efe9cf" />
        <path d="M5 4h5M5 7h5M5 10h3" stroke="#a39a74" />
        <circle cx="12" cy="11.5" r="3.5" fill="#8e98a0" />
      </Svg>
    ),
  },
  {
    name: "Group Policy Management Editor",
    running: true,
    icon: (
      <Svg size="size-4">
        <path d="M3 1h12l-2 3v8l-1 3H1l2-3z" fill="#f5edcb" />
        <path d="M6 4h5M6 7h5M6 10h4" stroke="#cdbf8c" />
      </Svg>
    ),
  },
];

function GuestTaskbar() {
  return (
    <footer className="relative mt-auto flex h-[26px] items-stretch bg-[#050505] text-white">
      {[
        { name: "Start", icon: <WindowsLogo /> },
        { name: "Search", icon: <SearchGlyph size="size-[11px]" /> },
        { name: "Task View", icon: <TaskView /> },
      ].map((item) => (
        <button key={item.name} type="button" aria-label={item.name} className="flex w-8 items-center justify-center">{item.icon}</button>
      ))}
      <div className="ml-[3px] grid w-[228px] grid-cols-7">
        {GUEST_APPS.map((app) => (
          <button
            key={app.name}
            type="button"
            aria-label={app.name}
            className={clsx("mx-[3px] flex items-center justify-center border-b-2", app.running ? "border-[#76b9ed]" : "border-transparent")}
          >
            {app.icon}
          </button>
        ))}
      </div>
      <div className="ml-auto flex items-center pr-[17px]">
        <Chevron dir="up" size="size-[9px]" color="#eee" />
        <span className="ml-[6px] flex gap-1"><NetworkTray alert /><Speaker muted /></span>
        <div className="mr-[14px] ml-[6px] text-center leading-3">
          <div>10:50 AM</div>
          <div>6/4/2020</div>
        </div>
        <ActionCenter size="size-[11px]" />
      </div>
    </footer>
  );
}

function VmStatusBar() {
  const c = "#777";
  return (
    <div className="flex h-[14px] items-center bg-[#f0f0f0] pr-[14px] pl-px text-[#222]">
      <p>To return to your computer, move the mouse pointer outside or press Ctrl+Alt.</p>
      <div className="ml-auto flex items-center gap-[3px]">
        <Svg size="size-[11px]"><path d="M1 10l2-7h10l2 7v3H1zM1 10h14" stroke={c} strokeWidth="1.4" /><circle cx="14" cy="13" r="2" fill="#2fbf71" /></Svg>
        <Svg size="size-[11px]"><circle cx="8" cy="8" r="6.5" stroke={c} strokeWidth="1.4" /><circle cx="8" cy="8" r="2" stroke={c} /><path d="M11 10h5v5h-5z" fill="#5fb04a" /></Svg>
        <Svg size="size-[11px]"><path d="M1 2h9v6H1zM7 8h7v6H7z" stroke={c} strokeWidth="1.4" /><path d="M9 11h5v4H9z" fill="#5fb04a" /></Svg>
        <Svg size="size-[11px]"><path d="M4 5V1h8v4M4 11H1V5h14v6h-3M4 9h8v5H4z" stroke="#b5b5b5" strokeWidth="1.4" /></Svg>
        <Svg size="size-[11px]"><path d="M1 6h3l4-3v10l-4-3H1z" stroke={c} strokeWidth="1.4" /><path d="M10 5v5M13 4v5" stroke={c} /><path d="M10 10h5v4h-5z" fill="#5fb04a" /></Svg>
        <Svg size="size-[11px]"><path d="M2 6h3l4-3v10l-4-3H2zM12 5v6" stroke="#c4c4c4" strokeWidth="1.4" /></Svg>
        <span className="h-[10px] w-px bg-[#aaa]" />
        <span className="ml-[3px] flex"><Svg size="size-[11px]"><path d="M1 1h14v9l-5 5H1z" fill="#27d3b4" /><path d="M10 15v-5h5z" fill="#178c79" /></Svg></span>
      </div>
    </div>
  );
}

const HOST_APPS = [
  { name: "Host Start", icon: <WindowsLogo /> },
  { name: "Host Search", icon: <SearchGlyph size="size-[11px]" /> },
  { name: "Host Task View", icon: <TaskView /> },
  {
    name: "Terminal",
    icon: <Svg size="size-[11px]"><path d="M0 2h15v4H0z" fill="#c9ced2" /><path d="M3 6h12v8H5z" fill="#1c272d" /><path d="M6 7l3 2.5L6 12M10 12h3" stroke="#eee" /></Svg>,
  },
  {
    name: "Chrome",
    icon: (
      <Svg size="size-[11px]">
        <path d="M8 8L1.4 4.2A7.6 7.6 0 0 1 14.6 4.2z" fill="#e8453c" />
        <path d="M8 8l6.6-3.8A7.6 7.6 0 0 1 8 15.6z" fill="#f9bb2d" />
        <path d="M8 8v7.6A7.6 7.6 0 0 1 1.4 4.2z" fill="#3aa757" />
        <circle cx="8" cy="8" r="3.7" fill="#fff" />
        <circle cx="8" cy="8" r="2.8" fill="#4688f1" />
      </Svg>
    ),
  },
  { name: "Host Explorer", icon: <ExplorerIcon size="size-3" />, running: true },
  {
    name: "Notepad++",
    icon: <Svg size="size-3"><path d="M2 2h11v13H2z" fill="#eee" /><path d="M2 1h11v3H2z" fill="#a6afb4" /><path d="M4 7h6v6H4z" fill="#8bc53f" /><path d="M14 3L7 11" stroke="#3c3c3c" strokeWidth="2" /></Svg>,
  },
  {
    name: "Recorder",
    running: true,
    icon: <Svg size="size-[11px]"><circle cx="8" cy="8" r="6" fill="#1e2a31" stroke="#3d4c54" strokeWidth="2" /><path d="M8 2a6 6 0 0 1 6 5" stroke="#5b6971" strokeWidth="2" /></Svg>,
  },
  { name: "VMware", icon: <VmwareLogo size="size-3" />, running: true, active: true },
];

const HOST_TRAY = [
  <path key="mic" d="M6 1h4v8H6zM4 8v3h8V8M8 11v4M5 15h6" fill="#eee" stroke="#eee" strokeWidth="1" />,
  <path key="play" d="M13 1L3 8l10 7-3-7z" fill="#e8503a" />,
  <g key="shield">
    <path d="M8 1l6 2v5c0 4-3 6-6 7-3-1-6-3-6-7V3z" fill="#eee" />
    <path d="M8 1v14M2 7h12" stroke="#1f2c49" strokeWidth="1.5" />
    <path d="M11 8l4.5 7.5h-9z" fill="#fbc02d" />
  </g>,
  <g key="v">
    <path d="M1 1h14v14H1z" fill="#f4f4f4" />
    <path d="M4 4l4 8 4-8" stroke="#d22" strokeWidth="2" />
  </g>,
  <g key="burn">
    <path d="M1 1h14v14H1z" fill="#f26a21" />
    <path d="M10 3L5 8h5l-5 5h7" stroke="#fff" strokeWidth="1.3" />
  </g>,
  <path key="vm" d="M3 12H1V1h10v3M5 5h10v9H5zM8 7l5 2.5L8 12z" stroke="#a9b5b9" strokeWidth="1.4" />,
  <g key="ok">
    <circle cx="8" cy="8" r="7" fill="#6cbd2b" />
    <path d="M4.5 8L7 10.5 11.5 6" stroke="#fff" strokeWidth="2" />
  </g>,
];

function HostTaskbar() {
  return (
    <footer className="flex h-5 items-stretch bg-linear-to-r from-[#213b46] via-[#203444] to-[#1d2b4a] text-white">
      <div className="grid w-[221px] grid-cols-9">
        {HOST_APPS.map((app) => (
          <button
            key={app.name}
            type="button"
            aria-label={app.name}
            className={clsx(
              "flex items-center justify-center border-b-2",
              app.running ? "border-[#76b9ed]" : "border-transparent",
              app.active ? "bg-[#4c626c]" : "mx-[3px]",
            )}
          >
            {app.icon}
          </button>
        ))}
      </div>
      <div className="ml-auto flex items-center pr-[17px]">
        <div className="flex items-center gap-[5px]">
          {HOST_TRAY.map((art, i) => (
            <Svg key={i} size="size-[11px]">{art}</Svg>
          ))}
          <NetworkTray />
          <Svg size="size-[11px]"><circle cx="8" cy="8" r="6.5" fill="#e8112d" /></Svg>
          <Speaker />
        </div>
        <span className="ml-[8px]">ENG</span>
        <span className="mr-[10px] ml-[9px]">10:50 AM</span>
        <ActionCenter size="size-[11px]" />
      </div>
    </footer>
  );
}

export default function App() {
  return (
    <div className="flex h-screen flex-col overflow-hidden bg-black font-[Roboto,'Noto_Sans',sans-serif] text-[8px] leading-[11px]">
      <VmHeader />
      <main className="relative flex min-h-0 flex-1 flex-col border-t border-black bg-black">
        <ul className="flex w-[52px] flex-col gap-[22px] pt-1 text-white">
          {SHORTCUTS.map((item) => (
            <li key={item.label}>
              <button type="button" className="flex w-full flex-col items-center gap-[2px] leading-[10px]">
                {item.icon}
                <span>{item.label}</span>
              </button>
            </li>
          ))}
        </ul>

        <dl className="absolute top-[501px] left-[658px] grid grid-cols-[128px_auto] font-['Liberation_Sans',sans-serif] text-[11px] leading-[13px] font-bold whitespace-nowrap text-white">
          {BG_INFO.map(([term, value]) => (
            <div key={term} className="contents">
              <dt>{term}</dt>
              <dd>{value}</dd>
            </div>
          ))}
        </dl>

        <PolicyEditor />
        <LogonProperties />
        <AddScript />
        <BrowseDialog />
        <GuestTaskbar />

        <svg className="pointer-events-none absolute top-[473px] left-[905px] h-[13px] w-[9px]" viewBox="0 0 9 13" aria-hidden="true">
          <path d="M.5.5V11L3 8.700l1.800 3.800 1.600-.7-1.700-3.700H8z" fill="#fff" stroke="#333" strokeWidth=".8" />
        </svg>
      </main>
      <VmStatusBar />
      <HostTaskbar />
    </div>
  );
}
